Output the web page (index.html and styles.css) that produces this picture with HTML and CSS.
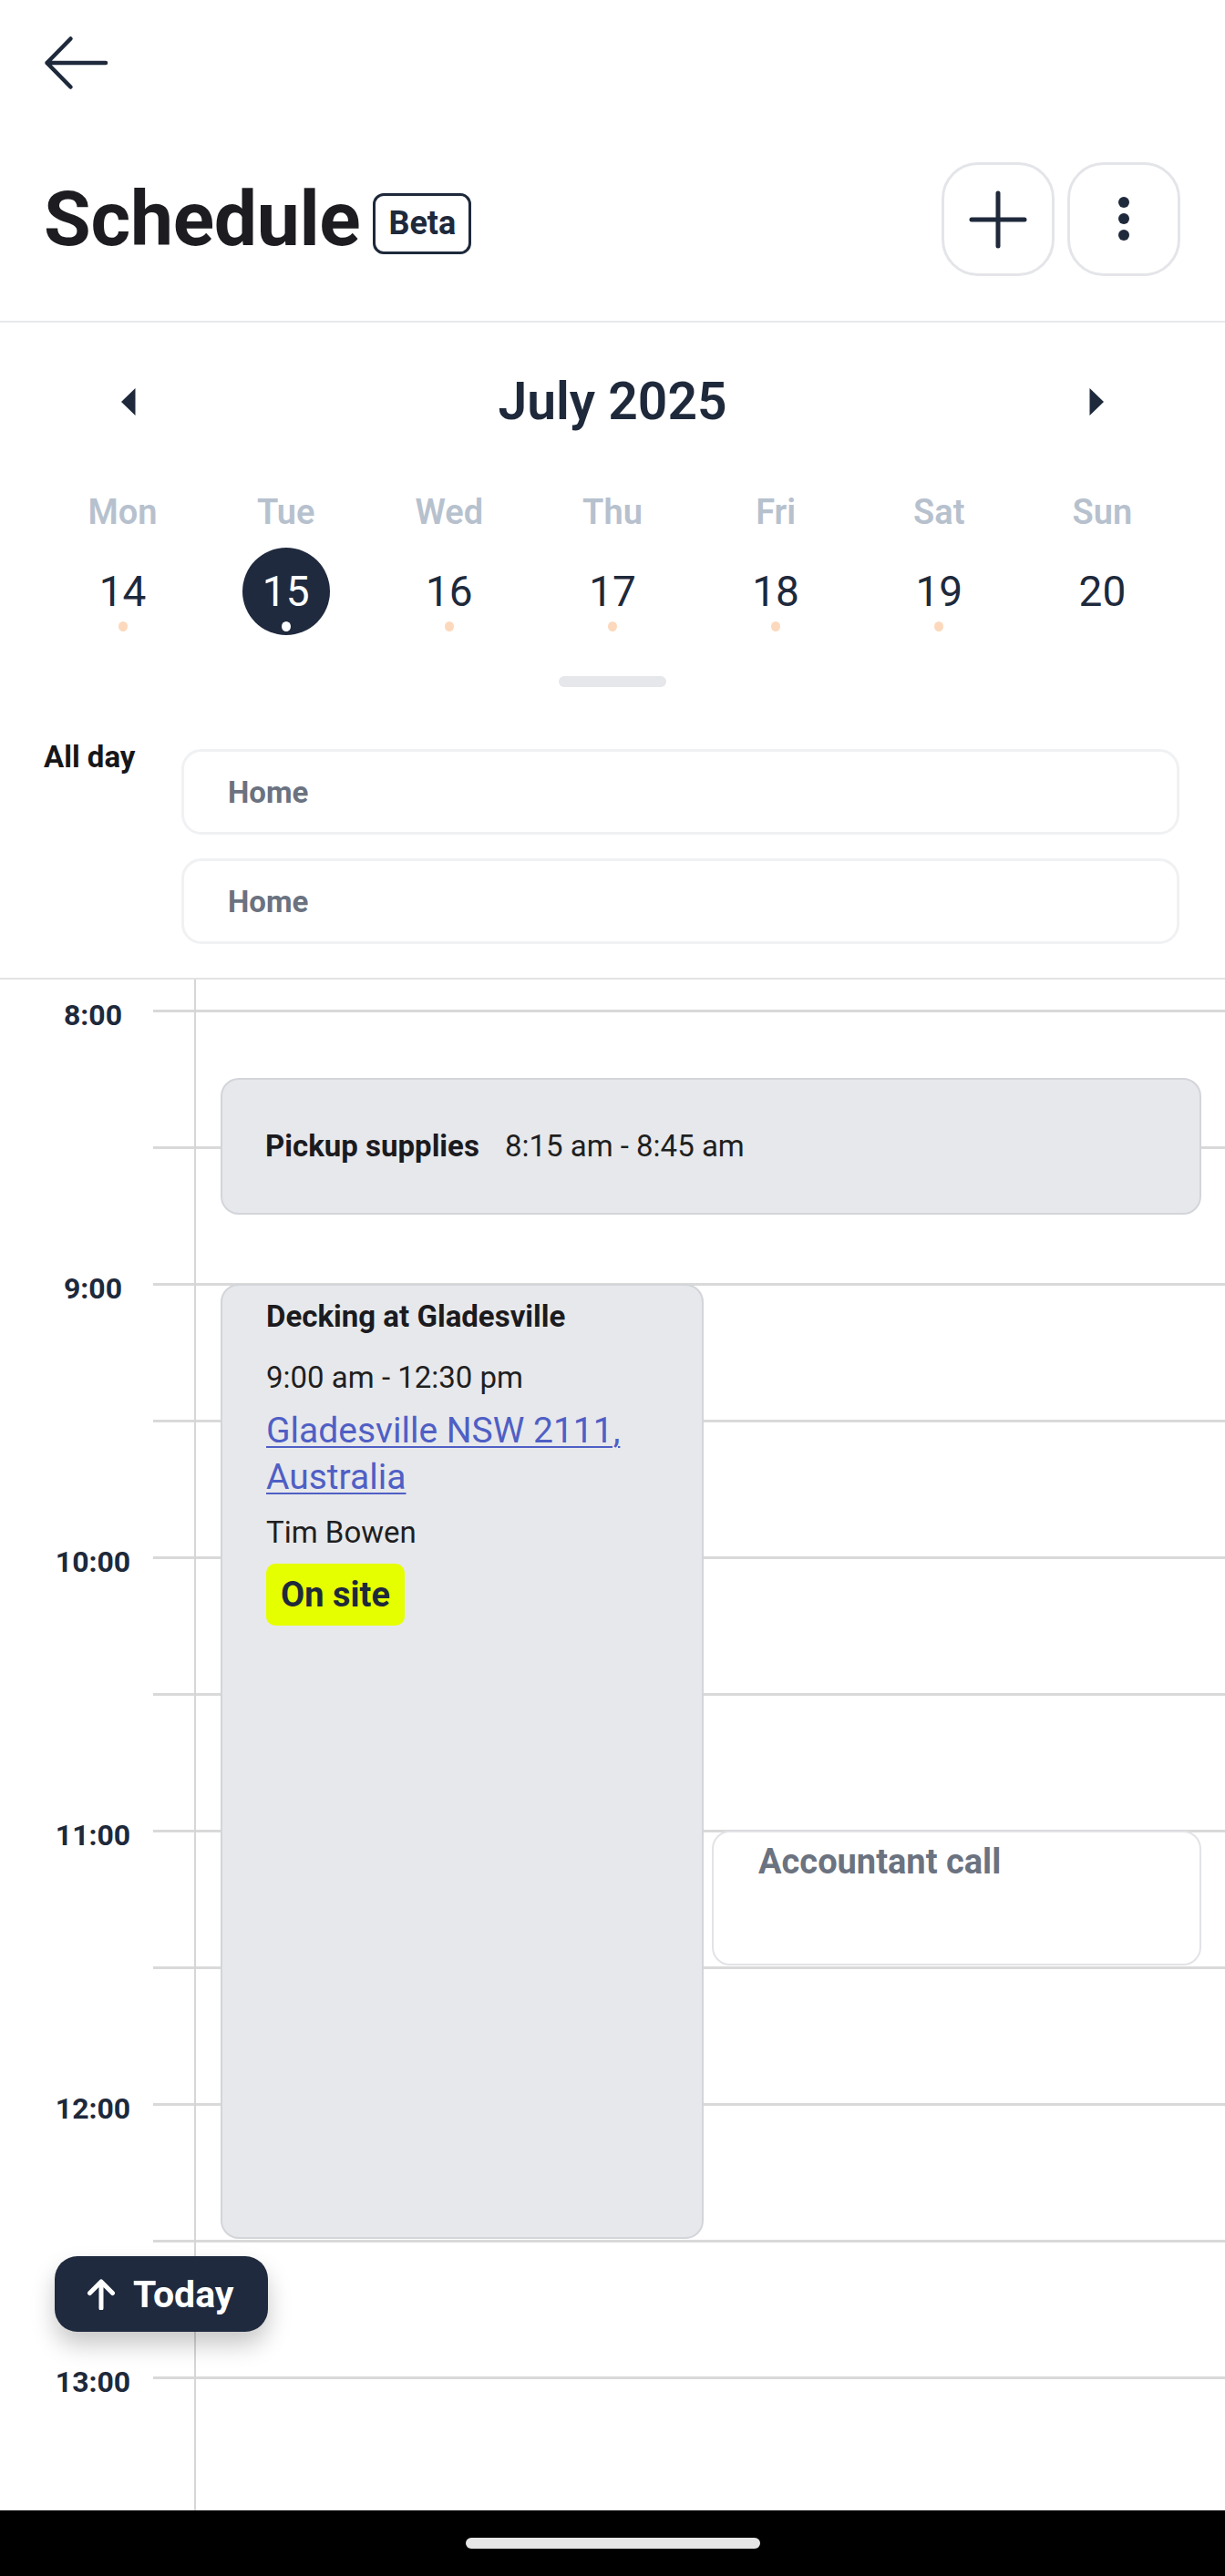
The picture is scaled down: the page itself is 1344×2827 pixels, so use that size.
FILE: index.html
```html
<!DOCTYPE html>
<html lang="en">
<head>
<meta charset="utf-8">
<title>Schedule</title>
<link rel="stylesheet" href="styles.css">
</head>
<body>
<div class="app">
  <div class="topbar">
    <button class="back" aria-label="Back">
      <svg width="72" height="60" viewBox="0 0 72 60"><path d="M68 30H3.5M29.5 3.5L3.5 30L29.5 56.5" fill="none" stroke="#1e293b" stroke-width="4.5" stroke-linecap="round" stroke-linejoin="round"/></svg>
    </button>
  </div>

  <div class="title-row">
    <div class="title-group">
      <h1 class="title">Schedule</h1>
      <span class="badge">Beta</span>
    </div>
    <div class="actions">
      <button class="icon-btn" aria-label="Add">
        <svg width="64" height="64" viewBox="0 0 64 64"><path d="M32 3V61M3 32H61" fill="none" stroke="#1e293b" stroke-width="5" stroke-linecap="round"/></svg>
      </button>
      <button class="icon-btn" aria-label="More">
        <svg width="14" height="52" viewBox="0 0 14 52"><circle cx="7" cy="7" r="6" fill="#1e293b"/><circle cx="7" cy="25" r="6" fill="#1e293b"/><circle cx="7" cy="43" r="6" fill="#1e293b"/></svg>
      </button>
    </div>
  </div>

  <section class="calendar">
    <div class="month-row">
      <button class="nav-arrow" aria-label="Previous month">
        <svg width="16" height="30" viewBox="0 0 16 30"><polygon points="15.5,0 15.5,30 0,15" fill="#1e293b"/></svg>
      </button>
      <h2 class="month">July 2025</h2>
      <button class="nav-arrow" aria-label="Next month">
        <svg width="16" height="30" viewBox="0 0 16 30"><polygon points="0.5,0 0.5,30 16,15" fill="#1e293b"/></svg>
      </button>
    </div>
    <div class="week">
      <div class="day"><span class="dow">Mon</span><span class="date">14<i class="dot"></i></span></div>
      <div class="day"><span class="dow">Tue</span><span class="date selected">15<i class="dot"></i></span></div>
      <div class="day"><span class="dow">Wed</span><span class="date">16<i class="dot"></i></span></div>
      <div class="day"><span class="dow">Thu</span><span class="date">17<i class="dot"></i></span></div>
      <div class="day"><span class="dow">Fri</span><span class="date">18<i class="dot"></i></span></div>
      <div class="day"><span class="dow">Sat</span><span class="date">19<i class="dot"></i></span></div>
      <div class="day"><span class="dow">Sun</span><span class="date">20</span></div>
    </div>
    <div class="handle"></div>
  </section>

  <section class="allday">
    <div class="allday-label">All day</div>
    <div class="allday-event">Home</div>
    <div class="allday-event">Home</div>
  </section>

  <section class="timeline">
    <div class="slot"><div class="slot-label">8:00</div><div class="slot-line"></div></div>
    <div class="slot"><div class="slot-label"></div><div class="slot-line"></div></div>
    <div class="slot"><div class="slot-label">9:00</div><div class="slot-line"></div></div>
    <div class="slot"><div class="slot-label"></div><div class="slot-line"></div></div>
    <div class="slot"><div class="slot-label">10:00</div><div class="slot-line"></div></div>
    <div class="slot"><div class="slot-label"></div><div class="slot-line"></div></div>
    <div class="slot"><div class="slot-label">11:00</div><div class="slot-line"></div></div>
    <div class="slot"><div class="slot-label"></div><div class="slot-line"></div></div>
    <div class="slot"><div class="slot-label">12:00</div><div class="slot-line"></div></div>
    <div class="slot"><div class="slot-label"></div><div class="slot-line"></div></div>
    <div class="slot"><div class="slot-label">13:00</div><div class="slot-line"></div></div>
    <div class="slot"><div class="slot-label"></div><div class="slot-line"></div></div>

    <div class="events">
      <div class="event event-gray pickup" style="top:108px;height:150px;left:27px;width:1076px">
        <span class="ev-title">Pickup supplies</span>
        <span class="ev-time">8:15 am - 8:45 am</span>
      </div>
      <div class="event event-gray decking" style="top:334px;height:1048px;left:27px;width:530px">
        <span class="ev-title">Decking at Gladesville</span>
        <span class="ev-time">9:00 am - 12:30 pm</span>
        <a class="ev-link" href="#">Gladesville NSW 2111, Australia</a>
        <span class="ev-person">Tim Bowen</span>
        <span class="status">On site</span>
      </div>
      <div class="event event-white accountant" style="top:934px;height:148px;left:566px;width:537px">
        <span class="ev-title">Accountant call</span>
      </div>
    </div>

    <button class="today">
      <svg width="32" height="34" viewBox="0 0 32 34"><path d="M16 32V3M3.5 15.5L16 3L28.5 15.5" fill="none" stroke="#fff" stroke-width="5" stroke-linecap="round" stroke-linejoin="round"/></svg>
      <span>Today</span>
    </button>
  </section>

  <div class="navbar"><div class="pill"></div></div>
</div>
</body>
</html>
```

FILE: styles.css
```css
* { box-sizing: border-box; margin: 0; padding: 0; }
html, body { background: #fff; }
body {
  font-family: Roboto, "Noto Sans", "Liberation Sans", sans-serif;
  color: #1e293b;
  width: 1344px;
}
button { background: none; border: none; font: inherit; color: inherit; cursor: pointer; }

.app {
  width: 1344px;
  height: 2827px;
  display: flex;
  flex-direction: column;
  overflow: hidden;
}

/* Top bar */
.topbar {
  flex: none;
  height: 138px;
  display: flex;
  align-items: center;
  padding-left: 48px;
}
.back { display: flex; }

/* Title row */
.title-row {
  flex: none;
  display: flex;
  align-items: center;
  justify-content: space-between;
  padding: 40px 49px 49px 48px;
  border-bottom: 2px solid #e8e9ec;
}
.title-group { display: flex; align-items: center; gap: 14px; }
.title {
  font-size: 84px;
  font-weight: 700;
  line-height: 1;
  color: #1c1c21;
  letter-spacing: -0.3px;
}
.badge {
  display: inline-block;
  height: 67px;
  line-height: 61px;
  padding: 0 14px;
  border: 3px solid #1e293b;
  border-radius: 12px;
  font-size: 36px;
  font-weight: 700;
  color: #1e293b;
  margin-top: 10px;
}
.actions { display: flex; gap: 14px; }
.icon-btn {
  width: 124px;
  height: 125px;
  border: 3px solid #e4e5e9;
  border-radius: 40px;
  display: flex;
  align-items: center;
  justify-content: center;
}

/* Calendar */
.calendar {
  flex: none;
  padding-top: 57px;
  display: flex;
  flex-direction: column;
  align-items: center;
}
.month-row {
  width: 100%;
  height: 60px;
  display: flex;
  align-items: center;
  justify-content: space-between;
  padding: 0 133px;
}
.nav-arrow { display: flex; width: 16px; height: 30px; }
.month {
  font-size: 57px;
  font-weight: 600;
  line-height: 60px;
  color: #1e293b;
}
.week {
  width: 100%;
  display: grid;
  grid-template-columns: repeat(7, 1fr);
  padding: 0 45px;
  margin-top: 72px;
}
.day { display: flex; flex-direction: column; align-items: center; }
.dow {
  font-size: 38px;
  font-weight: 600;
  line-height: 38px;
  color: #b7c1ce;
}
.date {
  position: relative;
  width: 96px;
  height: 96px;
  margin-top: 20px;
  border-radius: 50%;
  text-align: center;
  font-size: 46px;
  line-height: 96px;
  color: #1e293b;
}
.date.selected { background: #1f2a3e; color: #fff; }
.dot {
  position: absolute;
  left: 43px;
  top: 81px;
  width: 10px;
  height: 11px;
  border-radius: 50%;
  background: #fcd9bd;
}
.date.selected .dot { background: #fff; }
.handle {
  width: 118px;
  height: 12px;
  border-radius: 6px;
  background: #e5e7eb;
  margin-top: 45px;
}

/* All day */
.allday {
  flex: none;
  display: grid;
  grid-template-columns: 199px 1fr;
  row-gap: 26px;
  padding: 68px 50px 37px 0;
  border-bottom: 2px solid #e3e3e3;
}
.allday-label {
  grid-row: 1;
  grid-column: 1;
  padding-left: 48px;
  font-size: 33px;
  font-weight: 700;
  line-height: 32px;
  color: #17171a;
  margin-top: -7px;
}
.allday-event {
  grid-column: 2;
  height: 94px;
  border: 3px solid #f0f1f3;
  border-radius: 22px;
  padding: 0 0 0 48px;
  display: flex;
  align-items: center;
  font-size: 33px;
  font-weight: 700;
  color: #6b7280;
}

/* Timeline */
.timeline {
  flex: 1;
  position: relative;
  overflow: hidden;
  padding-top: 33px;
}
.slot {
  display: grid;
  grid-template-columns: 168px 1fr;
  height: 150px;
}
.slot-label {
  padding-left: 36px;
  text-align: center;
  font-size: 32px;
  font-weight: 700;
  line-height: 32px;
  color: #1e293b;
  margin-top: -10px;
}
.slot-line { border-top: 3px solid #d9d9d9; }

.events {
  position: absolute;
  top: 0;
  bottom: 0;
  left: 213px;
  right: 0;
  border-left: 2px solid #d6d6d6;
}
.event { position: absolute; border-radius: 20px; }
.event-gray { background: #e7e8eb; border: 2px solid #d3d5da; }
.event-white { background: #fff; border: 2px solid #e2e3e7; }

.ev-title {
  font-size: 33px;
  font-weight: 700;
  line-height: 40px;
  color: #1b1b1f;
}
.ev-time {
  font-size: 33px;
  line-height: 40px;
  color: #1f1f1f;
}
.pickup {
  display: flex;
  align-items: center;
  padding-left: 47px;
}
.pickup .ev-time { margin-left: 28px; }

.decking {
  display: flex;
  flex-direction: column;
  align-items: flex-start;
  padding: 14px 20px 0 48px;
}
.decking .ev-time { margin-top: 27px; }
.ev-link {
  margin-top: 13px;
  font-size: 39px;
  line-height: 51px;
  color: #4f5fc5;
  text-decoration: underline;
  text-decoration-thickness: 2px;
  text-underline-offset: 4px;
}
.ev-person {
  margin-top: 15px;
  font-size: 33px;
  line-height: 40px;
  color: #1f1f1f;
}
.status {
  margin-top: 14px;
  height: 68px;
  line-height: 68px;
  padding: 0 16px;
  border-radius: 10px;
  background: #e5ff00;
  font-size: 38px;
  font-weight: 700;
  color: #1e293b;
}

.accountant { padding: 8px 20px 0 49px; }
.accountant .ev-title {
  font-size: 38px;
  line-height: 48px;
  color: #6b7280;
}

.today {
  position: absolute;
  left: 60px;
  bottom: 196px;
  height: 83px;
  padding: 0 38px 0 35px;
  display: flex;
  align-items: center;
  gap: 19px;
  background: #1f2a3e;
  color: #fff;
  border-radius: 25px;
  font-size: 41px;
  font-weight: 700;
  box-shadow: 0 14px 26px rgba(0, 0, 0, 0.22);
}

/* Android nav bar */
.navbar {
  flex: none;
  height: 72px;
  background: #000;
  display: flex;
  justify-content: center;
  padding-top: 30px;
}
.pill {
  width: 323px;
  height: 12px;
  border-radius: 6px;
  background: #e6e6e6;
}
```
